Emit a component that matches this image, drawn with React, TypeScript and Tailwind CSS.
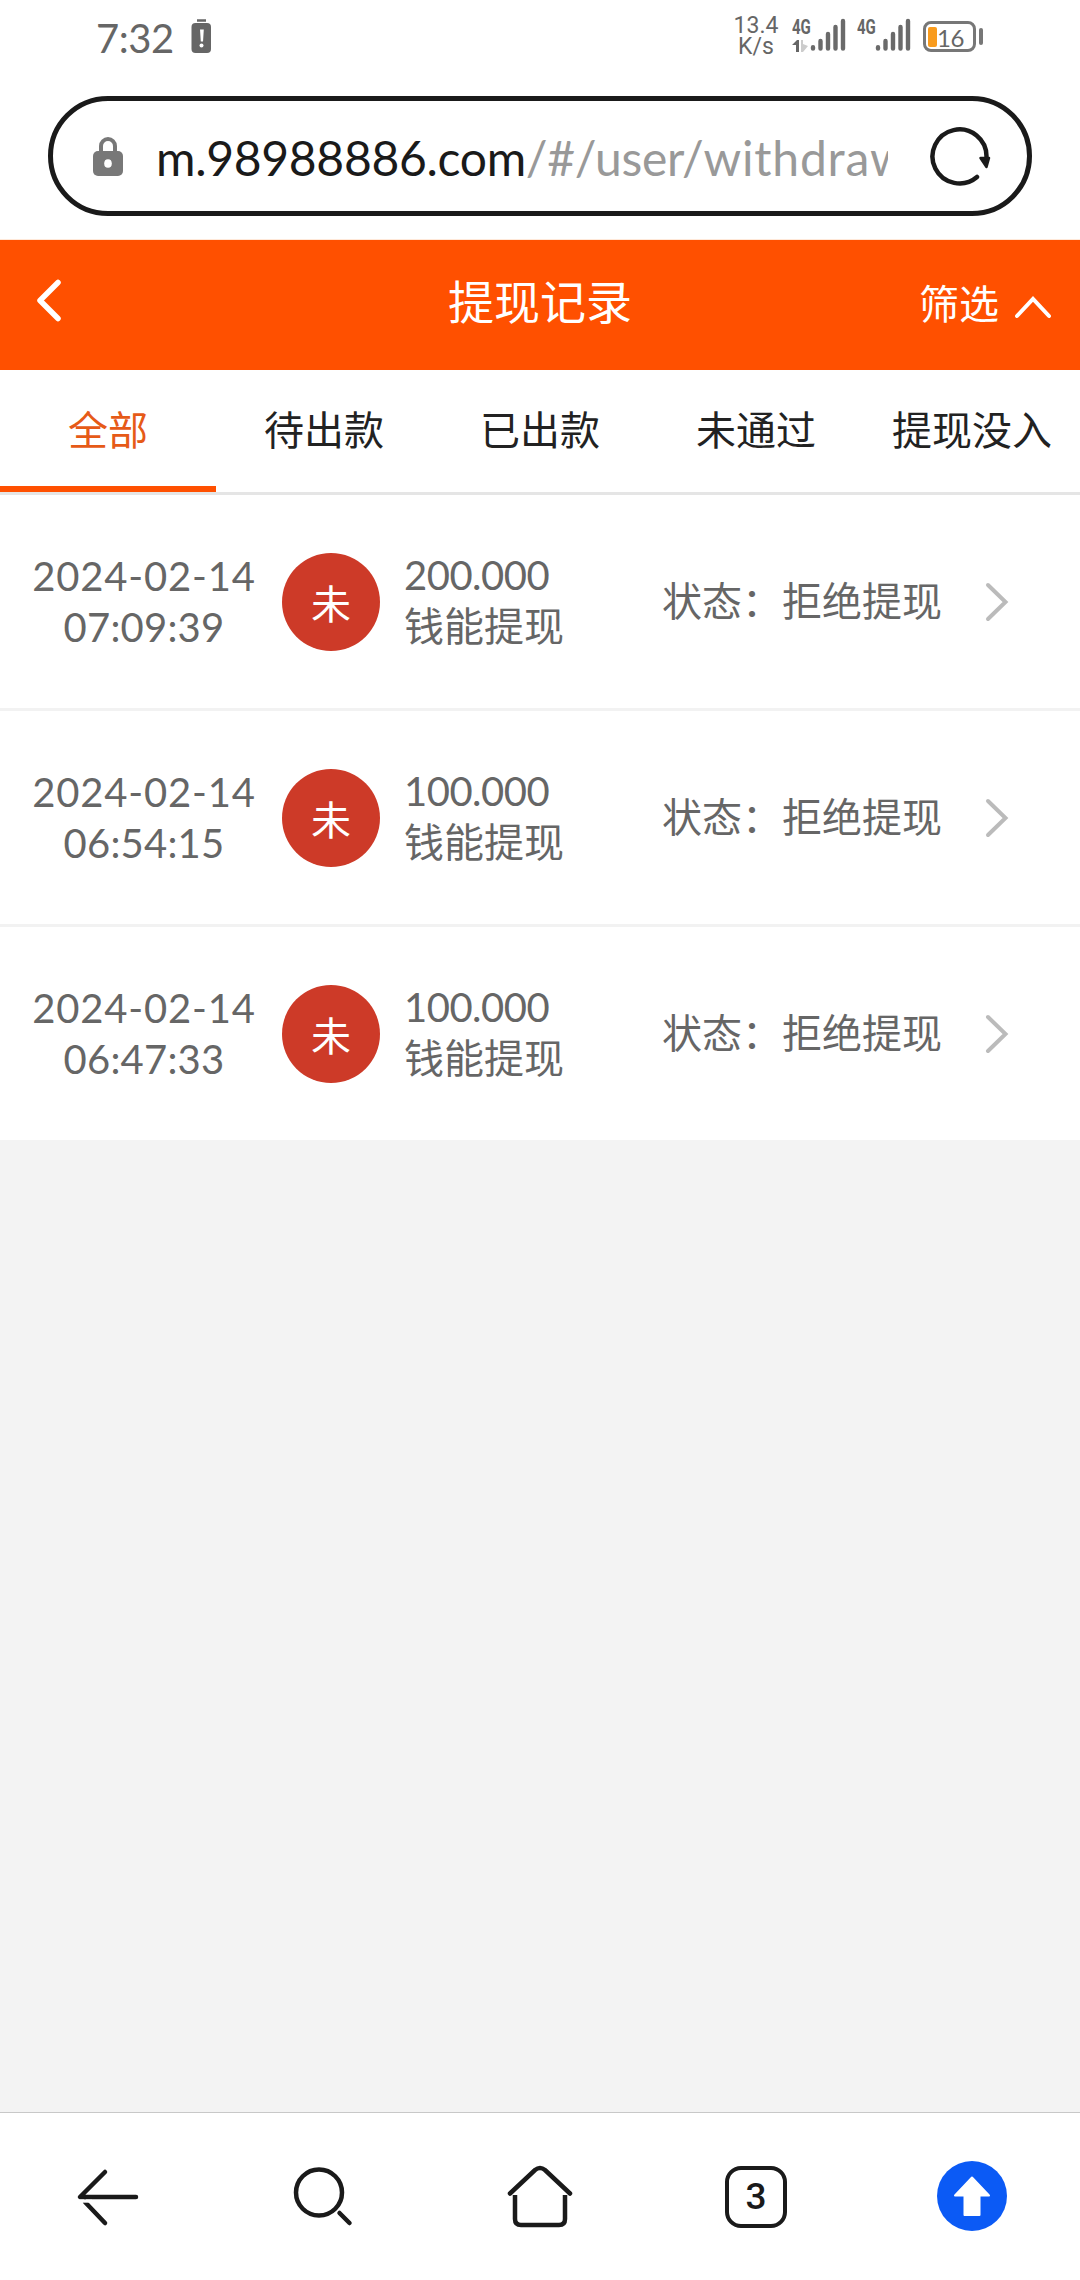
import React from "react";

interface WithdrawRecord {
  date: string;
  time: string;
  amount: string;
}

const TABS = ["全部", "待出款", "已出款", "未通过", "提现没入"];

const RECORDS: WithdrawRecord[] = [
  { date: "2024-02-14", time: "07:09:39", amount: "200.000" },
  { date: "2024-02-14", time: "06:54:15", amount: "100.000" },
  { date: "2024-02-14", time: "06:47:33", amount: "100.000" },
];

function SignalBars() {
  return (
    <svg width="36" height="34" viewBox="0 0 36 34" stroke="#6a6a6a" strokeWidth="4.4" strokeLinecap="round">
      <path d="M3 30.2v1.300M10.500 24v7.500M18 17v14.500M25.500 10v21.500M33 4v27.500" />
    </svg>
  );
}

function StatusBar() {
  return (
    <div className="flex h-24 items-start pl-24 text-[#666]">
      <div className="mt-[13px] w-[94px] text-[40px] leading-[50px] tracking-[-0.5px]">7:32</div>
      <svg className="mt-[19px]" width="22" height="36" viewBox="0 0 22 36">
        <path d="M7 1.500h9" stroke="#666" strokeWidth="2.500" />
        <rect x="1.5" y="4" width="19.5" height="30" rx="4" fill="#666" />
        <path d="M10 10.500h3.800l-.8 12h-2.200z" fill="#fff" />
        <circle cx="11.500" cy="26.500" r="2" fill="#fff" />
      </svg>
      <div className="mt-[15px] ml-[519px] w-[50px] text-center font-['Roboto'] text-[23px] leading-[22px]">
        <div className="h-[21px]">13.4</div>
        <div>K/s</div>
      </div>
      <div className="mt-[17px] ml-[11px] flex">
        <div className="w-[18px]">
          <div className="h-[21px] origin-left scale-x-[0.75] font-['Roboto'] text-[20px] leading-[20px] font-bold">4G</div>
          <svg width="18" height="15" viewBox="0 0 18 15">
            <path d="M0 7l5-5h2v12H4V7z" fill="#666" />
            <path d="M9 2h2v4l5 2-5 6H9z" fill="#ccc" />
          </svg>
        </div>
        <SignalBars />
      </div>
      <div className="mt-[17px] ml-[11px] flex">
        <div className="w-[18px]">
          <div className="origin-left scale-x-[0.75] font-['Roboto'] text-[20px] leading-[20px] font-bold">4G</div>
        </div>
        <SignalBars />
      </div>
      <div className="mt-[21px] ml-[12px] flex items-center">
        <div className="flex h-[31px] w-[53px] items-center rounded-[8px] border-3 border-[#777] pl-[2px]">
          <div className="h-[20px] w-[9px] rounded-[2px] bg-[#f99b1c]" />
          <div className="mt-[3px] text-[24px] leading-[24px] tracking-[-0.5px]">16</div>
        </div>
        <div className="ml-[3px] h-[17px] w-[4px] rounded-sm bg-[#777]" />
      </div>
    </div>
  );
}

function AddressBar() {
  return (
    <div className="mx-12 flex h-[120px] items-center rounded-full border-5 border-[#1a1a1a] pr-[36px] pl-10">
      <svg width="30" height="40" viewBox="0 0 30 40">
        <path d="M8 17V10a7 7 0 0 1 14 0v7" fill="none" stroke="#787878" strokeWidth="4" />
        <rect y="15" width="30" height="25" rx="5" fill="#787878" />
        <ellipse cx="15" cy="27.500" rx="3.800" ry="4.300" fill="#fff" />
      </svg>
      <div className="mt-[3px] ml-[33px] w-[732px] overflow-hidden text-[48px] leading-[70px] tracking-[-0.3px] whitespace-nowrap text-[#1a1a1a]">
        m.98988886.com<span className="tracking-[-0.3px] text-[#999]">/#/user/</span>
        <span className="tracking-[0.8px] text-[#999]">withdraw</span>
      </div>
      <svg className="ml-auto" width="64" height="64" viewBox="0 0 64 64" fill="none" stroke="#1a1a1a" strokeWidth="4.500" strokeLinecap="round">
        <path d="M50 53A27 27 0 1 1 59.500 33" />
        <path d="M53.500 34h8.500l-2.500 9z" fill="#1a1a1a" strokeWidth="2.500" strokeLinejoin="round" />
      </svg>
    </div>
  );
}

function Header() {
  return (
    <div className="grid h-[130px] grid-cols-3 items-center bg-[#ff5000] text-white">
      <svg className="mb-2.5 ml-[34px]" width="30" height="44" viewBox="0 0 30 44" fill="none" stroke="#fff" strokeWidth="5.500" strokeLinecap="round" strokeLinejoin="round">
        <path d="M24 4.500L6 22.500l18 18" />
      </svg>
      <div className="mb-1.5 text-center text-[46px] leading-[60px]">提现记录</div>
      <div className="flex items-center justify-end pr-[27px]">
        <span className="mb-0.5 text-[40px] leading-[60px]">筛选</span>
        <svg className="mt-1 ml-[14px]" width="40" height="26" viewBox="0 0 40 26" fill="none" stroke="#fff" strokeWidth="4" strokeLinecap="round">
          <path d="M4 22L20 5l16 17" />
        </svg>
      </div>
    </div>
  );
}

function RecordRow({ record }: { record: WithdrawRecord }) {
  return (
    <div className="flex h-[216px] items-center border-b-3 border-[#f2f2f2] bg-white text-[40px] leading-[51px] text-[#666] last:h-[213px] last:border-b-0">
      <div className="ml-[24px] w-[240px] text-center">
        <div className="tracking-[0.8px]">{record.date}</div>
        <div className="tracking-[0.2px]">{record.time}</div>
      </div>
      <div className="ml-[18px] flex size-[98px] items-center justify-center rounded-full bg-[#cd3a28] pt-1.5 text-white">未</div>
      <div className="mb-0.5 ml-[24px] w-[258px]">
        <div className="tracking-[-0.5px]">{record.amount}</div>
        <div>钱能提现</div>
      </div>
      <div>状态：拒绝提现</div>
      <svg className="ml-[41px]" width="28" height="42" viewBox="0 0 28 42" fill="none" stroke="#bbb" strokeWidth="4" strokeLinecap="round">
        <path d="M5 4l17.500 17L5 38" />
      </svg>
    </div>
  );
}

function BottomNav() {
  return (
    <div className="grid h-[168px] grid-cols-5 items-center justify-items-center border-t border-[#c8c8c8] bg-white">
      <svg width="72" height="72" viewBox="0 0 72 72" fill="none" stroke="#1a1a1a" strokeWidth="4.500" strokeLinecap="round">
        <path d="M33 11L8 36h56" strokeLinejoin="round" />
        <path d="M13 41L33 62" />
        <path d="M8 40.200h12" stroke="#fff" strokeWidth="3" strokeLinecap="butt" />
      </svg>
      <svg width="72" height="72" viewBox="0 0 72 72" fill="none" stroke="#1a1a1a" strokeWidth="4.500" strokeLinecap="round">
        <circle cx="31" cy="31.500" r="23" />
        <path d="M51.500 52l10 10" />
      </svg>
      <svg width="72" height="72" viewBox="0 0 72 72" fill="none" stroke="#1a1a1a" strokeWidth="4.500" strokeLinecap="round">
        <path d="M6 32.500L31 9q5-4 10 0l25 23.500" />
        <path d="M11 34V58q0 6 6 6h38q6 0 6-6V34" strokeLinecap="butt" />
      </svg>
      <div className="flex size-[62px] items-center justify-center rounded-[16px] border-[4.5px] border-[#1a1a1a] font-['Roboto'] text-[37px] leading-[40px] font-medium text-[#1a1a1a]">
        3
      </div>
      <svg className="mb-0.5" width="70" height="70" viewBox="0 0 70 70">
        <circle cx="35" cy="35" r="35" fill="#0b5af5" />
        <path d="M35 16.500L52 34.500H42.500V54H27.500V34.500H18z" fill="#fff" stroke="#fff" strokeWidth="2" strokeLinejoin="round" />
      </svg>
    </div>
  );
}

export default function App() {
  return (
    <div className="flex h-[2280px] w-[1080px] flex-col overflow-hidden bg-[#f3f3f3] font-['Lato','Noto_Sans_CJK_SC',sans-serif]">
      <div className="h-[240px] border-b border-[#ffe8d8] bg-white">
        <StatusBar />
        <AddressBar />
      </div>
      <Header />
      <div className="grid h-[125px] grid-cols-5 border-b-3 border-[#e5e5e5] bg-white text-[40px] text-[#222]">
        {TABS.map((tab, i) => (
          <div
            key={tab}
            className={
              i === 0
                ? "h-[122px] border-b-6 border-[#ff5000] text-center leading-[121px] text-[#e65a17]"
                : "h-[122px] text-center leading-[121px] whitespace-nowrap"
            }
          >
            {tab}
          </div>
        ))}
      </div>
      <div>
        {RECORDS.map((record) => (
          <RecordRow key={record.time} record={record} />
        ))}
      </div>
      <div className="flex-1" />
      <BottomNav />
    </div>
  );
}
